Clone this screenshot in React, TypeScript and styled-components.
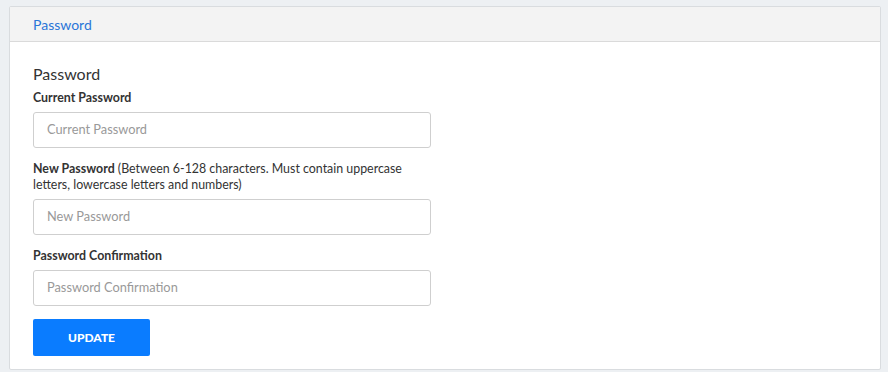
import React from "react";
import styled, { createGlobalStyle } from "styled-components";

const GlobalStyle = createGlobalStyle`
  * { box-sizing: border-box; }
  body {
    margin: 0;
    background: #edf0f3;
    font-family: Lato, "Open Sans", sans-serif;
    color: #333;
  }
`;

export default function App() {
  return (
    <>
      <GlobalStyle />
      <Page>
        <Card>
          <CardHeader>
            <HeaderLink>Password</HeaderLink>
          </CardHeader>
          <CardBody>
            <Title>Password</Title>
            <Field>
              <Label>
                <strong>Current Password</strong>
              </Label>
              <Input type="password" placeholder="Current Password" />
            </Field>
            <Field>
              <Label>
                <strong>New Password</strong> (Between 6-128 characters. Must
                contain uppercase letters, lowercase letters and numbers)
              </Label>
              <Input type="password" placeholder="New Password" />
            </Field>
            <Field>
              <Label>
                <strong>Password Confirmation</strong>
              </Label>
              <Input type="password" placeholder="Password Confirmation" />
            </Field>
            <UpdateButton>UPDATE</UpdateButton>
          </CardBody>
        </Card>
      </Page>
    </>
  );
}

const Page = styled.div`
  padding: 6px 7px 2px 9px;
`;

const Card = styled.section`
  background: #fff;
  border: 1px solid #d9dcdf;
  border-radius: 2px;
  width: 872px;
  height: 364px;
`;

const CardHeader = styled.div`
  background: #f3f3f3;
  border-bottom: 1px solid #dadada;
  height: 35px;
  padding: 0 23px;
  display: flex;
  align-items: center;
`;

const HeaderLink = styled.a`
  color: #2a76d8;
  font-size: 14px;
  cursor: pointer;
`;

const CardBody = styled.div`
  padding: 23px 23px 14px;
  display: flex;
  flex-direction: column;
  align-items: flex-start;
`;

const Title = styled.h3`
  margin: 0 0 7px;
  font-size: 16px;
  font-weight: 400;
  line-height: 18px;
  color: #333;
`;

const Field = styled.div`
  display: flex;
  flex-direction: column;
  gap: 6px;
  margin-bottom: 13px;
  width: 398px;
`;

const Label = styled.label`
  font-size: 12.4px;
  line-height: 16px;
  color: #333;

  strong {
    font-weight: 700;
  }
`;

const Input = styled.input`
  width: 398px;
  height: 36px;
  border: 1px solid #cfcfcf;
  border-radius: 3px;
  padding: 0 13px 2px;
  font-family: Lato, sans-serif;
  font-size: 12.8px;
  color: #333;
  outline: none;

  &::placeholder {
    color: #999;
  }
`;

const UpdateButton = styled.button`
  width: 117px;
  height: 37px;
  background: #0a7cff;
  border: none;
  border-radius: 2px;
  color: #fff;
  font-family: Lato, sans-serif;
  font-size: 12px;
  font-weight: 900;
  cursor: pointer;
`;
